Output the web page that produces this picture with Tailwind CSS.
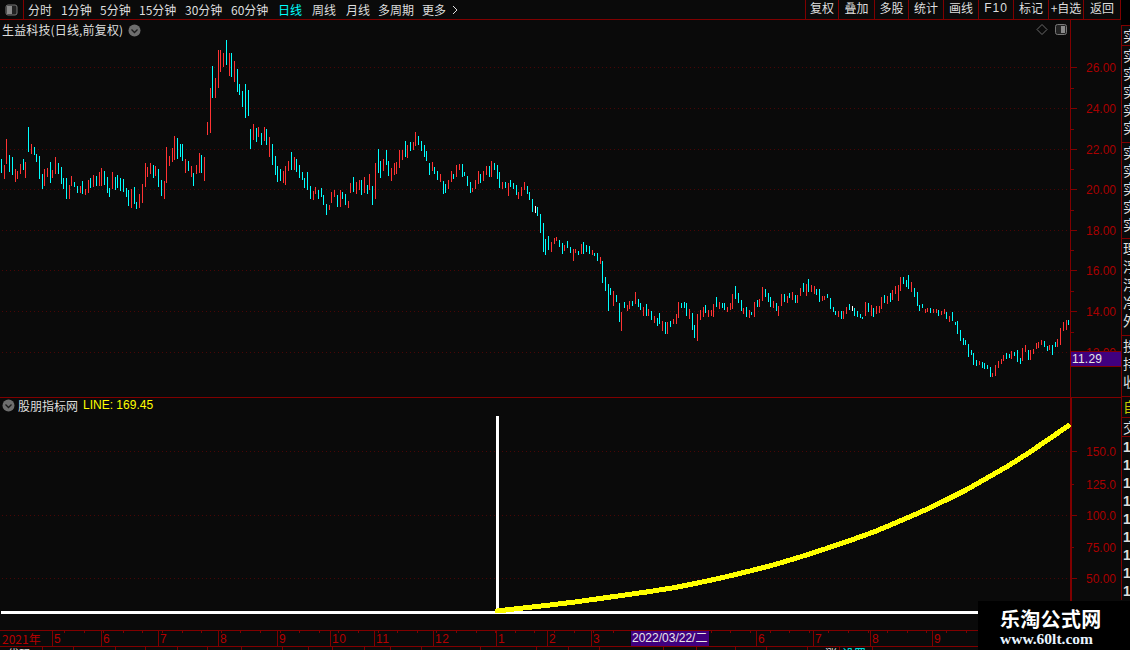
<!doctype html>
<html lang="zh">
<head>
<meta charset="utf-8">
<script src="https://cdn.jsdelivr.net/npm/@tailwindcss/browser@4"></script>
</head>
<body class="bg-black">
<div class="relative w-[1130px] h-[650px] overflow-hidden flex bg-[#0a0a0a] text-[#dedede] text-[12px] leading-[16px] font-['Noto_Sans_CJK_SC','Liberation_Sans',sans-serif]">
  <div class="w-[1121px] flex flex-col shrink-0">
    <!-- toolbar -->
    <div class="h-[20px] flex items-center border-b border-[#800000] shrink-0">
      <div class="w-[24px] h-full flex items-center justify-center border-r border-[#800000]">
        <svg width="13" height="12" viewBox="0 0 13 12"><rect x="1" y="1" width="11" height="10" rx="2" fill="#222" stroke="#777"/><rect x="2" y="2" width="5" height="8" fill="#8a8a8a"/></svg>
      </div>
      <div class="flex pl-[4px] items-center">
        <span class="w-[33px]">分时</span>
        <span class="w-[39px]">1分钟</span>
        <span class="w-[39px]">5分钟</span>
        <span class="w-[46px]">15分钟</span>
        <span class="w-[46px]">30分钟</span>
        <span class="w-[47px]">60分钟</span>
        <span class="w-[34px] text-[#00ffff]">日线</span>
        <span class="w-[34px]">周线</span>
        <span class="w-[32px]">月线</span>
        <span class="w-[44px]">多周期</span>
        <span class="w-[30px]">更多</span>
        <svg width="6" height="10" viewBox="0 0 6 10"><path d="M1 1l4 4-4 4" fill="none" stroke="#dedede"/></svg>
      </div>
      <div class="ml-auto flex h-full text-center">
        <span class="w-[33px] border-l border-[#800000]">复权</span>
        <span class="w-[36px] border-l border-[#800000]">叠加</span>
        <span class="w-[34px] border-l border-[#800000]">多股</span>
        <span class="w-[35px] border-l border-[#800000]">统计</span>
        <span class="w-[35px] border-l border-[#800000]">画线</span>
        <span class="w-[35px] border-l border-[#800000] font-['Liberation_Sans'] tracking-[1px]">F10</span>
        <span class="w-[35px] border-l border-[#800000]">标记</span>
        <span class="w-[35px] border-l border-[#800000] whitespace-nowrap">+自选</span>
        <span class="w-[38px] border-x border-[#800000]">返回</span>
      </div>
    </div>

    <!-- price pane -->
    <div class="relative h-[378px] border-b border-[#800000] shrink-0">
      <svg class="block" width="1121" height="377" viewBox="0 20 1121 377">
        <path stroke="#4a0606" stroke-dasharray="1 3" fill="none" shape-rendering="crispEdges" d="M2 67.5H1068M2 108.5H1068M2 149.5H1068M2 189.5H1068M2 230.5H1068M2 270.5H1068M2 311.5H1068M2 352.5H1068"/>
        <path id="up" fill="none" stroke="#ff3333" shape-rendering="crispEdges"/>
        <path id="dn" fill="none" stroke="#00ffff" shape-rendering="crispEdges"/>
        <path id="wh" fill="none" stroke="#ffffff" shape-rendering="crispEdges"/>
        <path fill="none" stroke="#800000" shape-rendering="crispEdges" d="M1070.5 20V397M1071 67.5H1077M1071 108.5H1077M1071 149.5H1077M1071 189.5H1077M1071 230.5H1077M1071 270.5H1077M1071 311.5H1077M1071 88.5H1074M1071 129.5H1074M1071 169.5H1074M1071 210.5H1074M1071 250.5H1074M1071 291.5H1074M1071 332.5H1074"/>
        <g class="fill-[#a80000] text-[12px] font-['Liberation_Sans']" text-anchor="end">
          <text x="1116" y="72">26.00</text>
          <text x="1116" y="113">24.00</text>
          <text x="1116" y="154">22.00</text>
          <text x="1116" y="194">20.00</text>
          <text x="1116" y="235">18.00</text>
          <text x="1116" y="275">16.00</text>
          <text x="1116" y="316">14.00</text>
          <text x="1116" y="357">12.00</text>
        </g>
      </svg>
      <div class="absolute left-[2px] top-[1px] flex items-center gap-[5px] whitespace-nowrap">
        <span class="text-[12px] leading-[18px] tracking-[0.15px]">生益科技(日线,前复权)</span>
        <svg width="13" height="13" viewBox="0 0 13 13"><circle cx="6.5" cy="6.5" r="6" fill="#6e6e6e"/><path d="M3.5 5.5l3 3 3-3" fill="none" stroke="#1a1a1a" stroke-width="1.3"/></svg>
      </div>
      <svg class="absolute left-[1036px] top-[3px]" width="32" height="14" viewBox="0 0 32 14">
        <path d="M6 1.5l5 5-5 5-5-5z" fill="none" stroke="#6a6a6a"/>
        <rect x="19.5" y="1.5" width="11" height="10" rx="2" fill="#222" stroke="#777"/><rect x="25" y="3" width="4" height="7" fill="#8a8a8a"/>
      </svg>
      <div class="absolute left-[1071px] top-[331px] w-[50px] h-[16px] bg-[#40007f] border-y border-[#800000] pl-[1px] font-['Liberation_Sans'] text-[12px] leading-[14px] tracking-[0.2px] text-[#e8e8e8]">11.29</div>
    </div>

    <!-- indicator pane -->
    <div class="relative h-[232px] shrink-0">
      <svg class="block" width="1121" height="232" viewBox="0 398 1121 232">
        <path stroke="#4a0606" stroke-dasharray="1 3" fill="none" shape-rendering="crispEdges" d="M2 451.5H1068M2 515.5H1068M2 578.5H1068"/>
        <path fill="none" stroke="#800000" stroke-width="2" shape-rendering="crispEdges" d="M1071 398V630"/>
        <path fill="none" stroke="#800000" shape-rendering="crispEdges" d="M1072 451.5H1077M1072 515.5H1077M1072 578.5H1077M1072 484.5H1074M1072 547.5H1074"/>
        <g class="fill-[#a80000] text-[12px] font-['Liberation_Sans']" text-anchor="end">
          <text x="1116" y="456">150.0</text>
          <text x="1116" y="489">125.0</text>
          <text x="1116" y="520">100.0</text>
          <text x="1116" y="552">75.00</text>
          <text x="1116" y="583">50.00</text>
        </g>
        <path fill="none" stroke="#ffffff" stroke-width="3" shape-rendering="crispEdges" d="M1 612.5H978M497.5 416V612"/>
        <polyline fill="none" stroke="#ffff00" stroke-width="5" stroke-linecap="round" stroke-linejoin="round" shape-rendering="crispEdges" points="497,611 523,608 550,605 575,602 600,598.5 625,595 650,591.5 675,587.5 700,582.5 725,577 750,571 775,564.5 800,557 825,549 850,540.5 875,531.5 900,521 923,511 945,500.5 966,490 987,478 1008,466 1030,452 1049,439 1068,426"/>
      </svg>
      <div class="absolute left-[2px] top-0 flex items-center whitespace-nowrap leading-[15px]">
        <svg width="13" height="13" viewBox="0 0 13 13"><circle cx="6.5" cy="6.5" r="6" fill="#6e6e6e"/><path d="M3.5 5.5l3 3 3-3" fill="none" stroke="#1a1a1a" stroke-width="1.3"/></svg>
        <span class="ml-[3px]">股朋指标网</span>
        <span class="ml-[5px] text-[#ffff00] font-['Liberation_Sans']">LINE: 169.45</span>
      </div>
    </div>

    <!-- date axis -->
    <div class="relative h-[17px] flex border-y border-[#800000] shrink-0 text-[#b40000] font-['Liberation_Sans'] text-[12px] leading-[16px] tracking-[0.5px]">
      <span class="w-[52px] pl-[2px] font-['Noto_Sans_CJK_SC'] tracking-normal">2021年</span>
      <span class="w-[49px] pl-[1px] border-l border-[#800000]">5</span>
      <span class="w-[57px] pl-[1px] border-l border-[#800000]">6</span>
      <span class="w-[60px] pl-[1px] border-l border-[#800000]">7</span>
      <span class="w-[59px] pl-[1px] border-l border-[#800000]">8</span>
      <span class="w-[53px] pl-[1px] border-l border-[#800000]">9</span>
      <span class="w-[44px] pl-[1px] border-l border-[#800000]">10</span>
      <span class="w-[59px] pl-[1px] border-l border-[#800000]">11</span>
      <span class="w-[63px] pl-[1px] border-l border-[#800000]">12</span>
      <span class="w-[51px] pl-[1px] border-l border-[#800000]">1</span>
      <span class="w-[44px] pl-[1px] border-l border-[#800000]">2</span>
      <span class="w-[40px] pl-[1px] border-l border-[#800000]">3</span>
      <span class="w-[125px] pl-[1px] border-l border-[#800000]">5</span>
      <span class="w-[57px] pl-[1px] border-l border-[#800000]">6</span>
      <span class="w-[57px] pl-[1px] border-l border-[#800000]">7</span>
      <span class="w-[62px] pl-[1px] border-l border-[#800000]">8</span>
      <span class="w-[60px] pl-[1px] border-l border-[#800000]">9</span>
      <svg id="ticks" class="absolute left-0 top-0" width="1121" height="3"><path id="tk" fill="none" stroke="#800000" shape-rendering="crispEdges"/></svg>
      <div class="absolute left-[631px] top-0 w-[78px] h-[15px] bg-[#40007f] text-[#e8e8e8] leading-[15px] tracking-normal font-['Liberation_Sans','Noto_Sans_CJK_SC'] whitespace-nowrap pl-[1px]">2022/03/22/二</div>
    </div>

    <!-- clipped footer row -->
    <div class="relative h-[3px] overflow-hidden shrink-0 leading-[13px]">
      <svg class="absolute left-0 top-0" width="1121" height="3"><path fill="none" stroke="#800000" shape-rendering="crispEdges" d="M42.5 0V3M73.5 0V3M115.5 0V3M145.5 0V3M177.5 0V3M207.5 0V3M241.5 0V3M282.5 0V3M308.5 0V3M332.5 0V3M364.5 0V3M390.5 0V3M421.5 0V3M480.5 0V3M536.5 0V3M568.5 0V3M599.5 0V3M663.5 0V3M696.5 0V3M735.5 0V3M766.5 0V3M807.5 0V3M839.5 0V3M872.5 0V3"/></svg>
      <span class="absolute left-[7px] top-0">代码</span>
      <span class="absolute left-[825px] top-0">涨</span>
      <span class="absolute left-[842px] top-0 text-[#00ffff]">设置</span>
    </div>
  </div>

  <!-- clipped side panel -->
  <div class="w-[9px] flex flex-col overflow-hidden bg-[#0a0a0a] shrink-0 text-[14px] leading-[18px]">
    <div class="h-[25px] shrink-0 bg-black"></div>
    <div class="h-[21px] border-y border-l border-[#800000] shrink-0 overflow-hidden pl-[1px]">实</div>
    <div class="h-[97px] shrink-0 overflow-hidden pl-[1px] border-b border-l border-[#800000]">
      <div>实</div><div>实</div><div>实</div><div>实</div><div>实</div>
    </div>
    <div class="h-[96px] shrink-0 overflow-hidden pl-[1px] border-b border-l border-[#800000]">
      <div>实</div><div>实</div><div>实</div><div>实</div><div>实</div>
    </div>
    <div class="h-[97px] shrink-0 overflow-hidden pl-[1px] border-b border-l border-[#800000]">
      <div>理</div><div>浮</div><div>浮</div><div>净</div><div>外</div>
    </div>
    <div class="h-[61px] shrink-0 overflow-hidden pl-[1px] border-b border-l border-[#800000]">
      <div>投</div><div>持</div><div>收</div>
    </div>
    <div class="h-[21px] shrink-0 overflow-hidden pl-[1px] border-b border-l border-[#800000] text-[#c8c800]">自</div>
    <div class="h-[19px] shrink-0 overflow-hidden pl-[1px] border-b border-l border-[#800000]">交</div>
    <div class="pl-[1px] border-l border-[#800000] font-['Liberation_Sans'] font-bold leading-[18px] text-[14px] pt-[1px]">
      <div>1</div><div>1</div><div>1</div><div>1</div><div>1</div><div>1</div><div>1</div><div>1</div><div>1</div>
    </div>
  </div>

  <!-- watermark -->
  <div class="absolute left-[978px] top-[601px] w-[152px] h-[49px] bg-black flex flex-col items-start pt-[7px] pl-[22px] text-white">
    <span class="font-['Noto_Sans_CJK_SC'] font-bold text-[20px] leading-[22px] tracking-[0.3px]">乐淘公式网</span>
    <span class="font-['Liberation_Serif'] font-bold text-[15.5px] leading-[18px] text-[#e8f4ff]">www.60lt.com</span>
  </div>
</div>
<script>
var S=[[0,120,"4c117-159 13r135-177 19r57-132 28c105-156 37c111-165 46r147-186 52r153-177 61r132-162 70c117-150 76r126-174 85c21-96 94r72-102 103c81-105 109c102-126 118c108-177 127c162-207 133r147-198 142r144-171 151c126-189 157r150-174 166r111-162 175c129-162 184c141-192 190c174-207 199c174-237 208r195-237 214r168-198 223c186-201 232c198-219 241r198-220 247c183-222 256r207-225 265r180-219 271c174-204 280r165-201 289c168-198 298r156-198 304r144-198 313c153-195 322c171-219 328c204-231 337r156-207 346c171-210 352c165-204 361c174-213 370c177-216 379c204-231 385c210-258 394r207-264 403c201-252 409c246-267 418r222-264 427r192-249 436r129-201 442r141-171 451r129-162 460c135-174 466r138-168 475c147-201 484c180-228 493r183-237 499r81-189 508r108-138 517r84-126 523r48-120 532c54-117 541c72-111 547c72-123 556r117-159 565c123-153 574r138-171 580c159-198 589r135-162 598r99-159"],
[200,30,"4c375-429 13r381-453 22r276-315 31r174-309 37c108-204 46r144-204 55r60-174 61r60-126 70r69-111 79c30-105 88r69-138 94c69-141 103r93-156 112c117-186 118c162-195 127c183-231 136c162-264 145c180-258 152c297-357 160r282-330 169c294-336 175r291-321 184c309-345 193r291-333 199c297-345 208r321-381 217c342-405 226c378-435 232c408-456 241c417-453 250r423-459 256r408-465 265r393-423 274c366-420 283r381-420 289c387-426 298c405-444 307c426-450 313c444-474 322c426-480 331c468-507 340r483-510 346r471-492 355c480-507 364c474-501 370c495-525 379c522-555 388r525-540 394r486-519 403r480-501 412c495-531 421r480-531 427c486-507 436c492-525 445r513-534 451r459-489 460c441-486 469r456-492 478r450-480 484c450-495 493r441-489 502c465-492 508r432-480 517c468-525 526r399-507 535c357-429 541c393-444 550r387-423 559c360-405 565c393-438 574r414-453 583r399-435 589r396-432 598r360-414"],
[400,120,"7r90-120 16c63-111 22r75-114 31c66-93 40r66-90 46r36-78 55c48-75 64c63-93 73c75-111 79c93-123 88c129-165 97r126-153 103c141-162 112c153-180 121r162-186 130c183-222 136c192-219 145r180-207 154r153-186 160c162-177 169r135-171 178r132-150 187c132-171 193c156-168 202c168-198 211c186-219 217r204-216 226r180-207 235r153-192 241c162-189 250r153-183 259r138-165 268c138-171 274r123-171 283c129-150 292c135-177 298c156-204 307r186-207 316c186-204 325r189-228 331c180-201 340c189-207 349c195-225 355r216-237 364r201-228 373r186-210 382c198-222 388c216-240 397c237-276 406w258-279 412c261-288 421c282-339 430c309-396 436c357-405 445c348-390 454r366-396 463r354-372 469r351-363 478c360-381 487c369-402 493r375-393 502c363-384 511c381-399 520r387-423 526r387-399 535c393-405 544r372-402 550c366-402 559c375-396 568c378-402 577r390-405 583c399-408 592c399-423 601r411-432 607c423-489 616c471-513 625c492-573 631c504-525 640r513-558 649c525-546 658c549-606 664r576-633 673c546-564 682r555-573 688r543-567 697c543-558 706r516-552 715c537-561 721c549-570 730r561-588 739c552-588 745r567-588"],
[650,260,"4c153-180 13r168-189 22c174-198 28c159-192 37r183-213 46c186-222 52r186-222 61c183-201 70r177-192 79r162-192 85r126-174 94c129-144 103c126-144 109c129-168 118r147-177 127c159-210 133c195-234 142r162-243 151r150-180 160r141-171 166c135-159 175r150-171 184r150-168 190r132-171 199c111-141 208r126-147 217c129-144 223c129-150 232r141-156 241r129-150 247r102-147 256c78-117 265c99-129 274c120-153 280r144-162 289c141-171 298r150-174 304c156-165 313r126-171 322c120-141 328r117-141 337r81-123 346c87-111 355c99-126 361c111-141 370r123-144 379c129-153 385r138-168 394r102-138 403c102-126 412r108-129 418c99-114 427r96-120 436c105-129 442r105-129 451r84-108 460c69-96 469r72-108 475c57-96 484r75-96 493r78-102 499c87-105 508c87-126 517r108-123 523r108-120 532c102-114 541c114-147 550c141-156 556c153-165 565r153-171 574c153-177 580r153-177 589r141-162 598c132-150 607w138-153 613c144-168 622c153-171 631c162-174 637c171-177 646r126-168 655c129-156 664r135-168 670c144-171 679r138-162 688r138-159 694r111-147 703c105-129 712r108-132 721c99-126 727r90-120 736r78-102 745r75-123 751r51-93 760c51-72 769c60-81 775c45-87 784r66-96 793c84-111 802c96-138 808c135-153 817c132-144 826r147-159 832r144-156 841c144-159 850r147-159 859r147-159 865c150-168 874r153-165 883r147-162 889c156-177 898r168-186 907c156-183 916c186-195 922c183-222 931c210-243 940c234-255 946c240-255 955c252-291 964c270-285 970c279-315 979c300-318 988r303-315 997c306-324 1003c309-327 1012c315-327 1021c321-351 1027r339-351 1036r315-348 1045r303-324 1054r297-312 1060r285-303 1069c279-297 1078c282-294 1084r273-297 1093c276-288 1102c270-306 1111c294-312 1117r264-303 1126r255-276 1135c270-300 1141r270-300 1150r267-282 1159r249-267 1165r246-264 1174r240-255 1183c243-261 1192c258-273 1198r255-270 1207c255-285 1216c246-261 1222r237-261 1231r204-255 1240r186-213 1249r180-210 1255c180-195"]];
var d={c:"",r:"",w:""};
S.forEach(function(s){var re=/(\d+)([crw])(\d+)-(\d+)/g,m;while((m=re.exec(s[2]))){var x=Math.floor(+m[1]/3)+s[0]+.5,a=Math.round(+m[3]/3)+s[1],b=Math.round(+m[4]/3)+s[1];d[m[2]]+="M"+x+" "+a+"V"+b;}});
document.getElementById("dn").setAttribute("d",d.c);
document.getElementById("up").setAttribute("d",d.r);
document.getElementById("wh").setAttribute("d",d.w);
var t="";for(var x=64;x<978;x+=19.6){t+="M"+(Math.round(x)+.5)+" 0V2";}
document.getElementById("tk").setAttribute("d",t);
</script>
</body>
</html>
